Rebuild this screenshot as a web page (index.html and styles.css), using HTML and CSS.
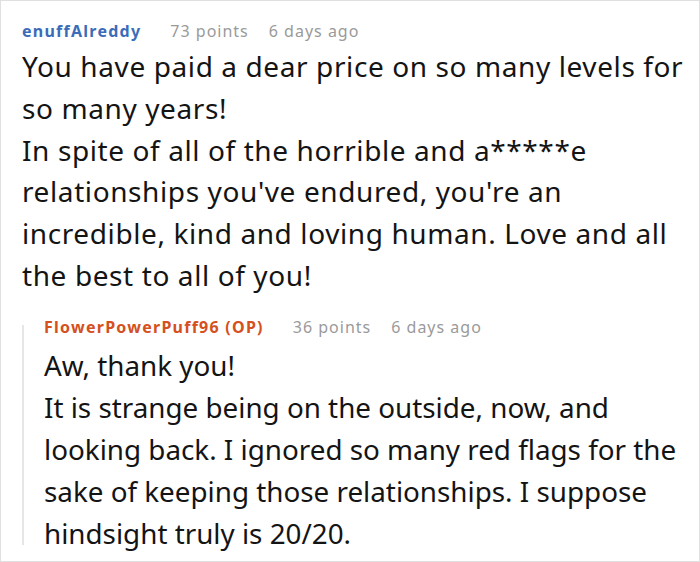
FILE: index.html
```html
<!DOCTYPE html>
<html>
<head>
<meta charset="utf-8">
<link rel="stylesheet" href="styles.css">
</head>
<body>
<div class="frame">
  <div class="comment">
    <div class="meta">
      <span class="user">enuffAlreddy</span>
      <span class="points">73 points</span>
      <span class="date">6 days ago</span>
    </div>
    <div class="text">
      <p>You have paid a dear price on so many levels for so many years!</p>
      <p>In spite of all of the horrible and a*****e relationships you've endured, you're an incredible, kind and loving human. Love and all the best to all of you!</p>
    </div>
    <div class="reply">
      <div class="meta">
        <span class="user op">FlowerPowerPuff96 (OP)</span>
        <span class="points">36 points</span>
        <span class="date">6 days ago</span>
      </div>
      <div class="text reply-text">
        <p>Aw, thank you!</p>
        <p>It is strange being on the outside, now, and looking back. I ignored so many red flags for the sake of keeping those relationships. I suppose hindsight truly is 20/20.</p>
      </div>
    </div>
  </div>
</div>
</body>
</html>
```
FILE: styles.css
```css
html, body {
  margin: 0;
  padding: 0;
  background: #ffffff;
}
.frame {
  box-sizing: border-box;
  width: 700px;
  height: 562px;
  border: 1px solid #e0e0e0;
  overflow: hidden;
  font-family: "Noto Sans", "Open Sans", sans-serif;
}
.comment {
  padding: 15px 12px 0 21px;
}
.meta {
  display: flex;
  font-size: 16px;
  line-height: 30px;
  height: 30px;
  letter-spacing: 1px;
}
.user {
  font-weight: 700;
  color: #3b6cb9;
  letter-spacing: 1.25px;
  margin-right: 29px;
}
.user.op {
  color: #d5501d;
}
.points {
  color: #9a9a9a;
  margin-right: 20px;
}
.date {
  color: #9a9a9a;
}
.text {
  font-size: 28px;
  line-height: 41.8px;
  letter-spacing: 0.6px;
  color: #141414;
}
.reply-text {
  margin-top: 2px;
  font-size: 27.8px;
  line-height: 42px;
  letter-spacing: 0;
}
.text p {
  margin: 0;
}
.reply {
  position: relative;
  margin-top: 15px;
  padding-left: 22px;
}
.reply::before {
  content: "";
  position: absolute;
  left: 0;
  top: 13px;
  bottom: 9px;
  width: 2px;
  background: #e6e6e6;
}
```
